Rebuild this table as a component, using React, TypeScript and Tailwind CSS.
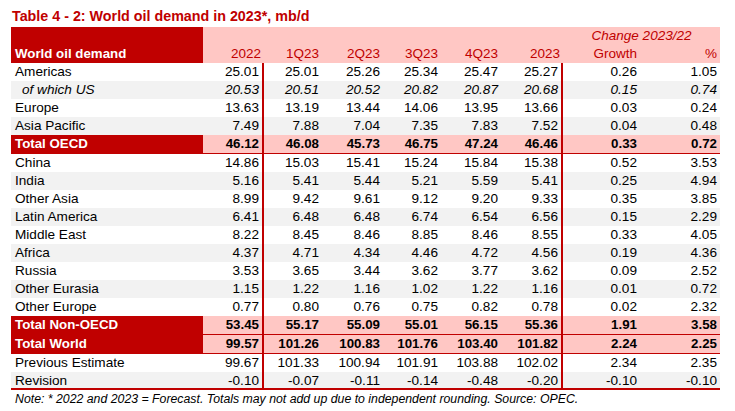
import React from "react";

type RowKind = "plain" | "sub" | "total" | "world";

type Row = {
  label: string;
  values: string[];
  kind: RowKind;
  grey?: boolean;
};

const ROWS: Row[] = [
  { label: "Americas", values: ["25.01", "25.01", "25.26", "25.34", "25.47", "25.27", "0.26", "1.05"], kind: "plain" },
  { label: "of which US", values: ["20.53", "20.51", "20.52", "20.82", "20.87", "20.68", "0.15", "0.74"], kind: "sub", grey: true },
  { label: "Europe", values: ["13.63", "13.19", "13.44", "14.06", "13.95", "13.66", "0.03", "0.24"], kind: "plain" },
  { label: "Asia Pacific", values: ["7.49", "7.88", "7.04", "7.35", "7.83", "7.52", "0.04", "0.48"], kind: "plain", grey: true },
  { label: "Total OECD", values: ["46.12", "46.08", "45.73", "46.75", "47.24", "46.46", "0.33", "0.72"], kind: "total" },
  { label: "China", values: ["14.86", "15.03", "15.41", "15.24", "15.84", "15.38", "0.52", "3.53"], kind: "plain" },
  { label: "India", values: ["5.16", "5.41", "5.44", "5.21", "5.59", "5.41", "0.25", "4.94"], kind: "plain", grey: true },
  { label: "Other Asia", values: ["8.99", "9.42", "9.61", "9.12", "9.20", "9.33", "0.35", "3.85"], kind: "plain" },
  { label: "Latin America", values: ["6.41", "6.48", "6.48", "6.74", "6.54", "6.56", "0.15", "2.29"], kind: "plain", grey: true },
  { label: "Middle East", values: ["8.22", "8.45", "8.46", "8.85", "8.46", "8.55", "0.33", "4.05"], kind: "plain" },
  { label: "Africa", values: ["4.37", "4.71", "4.34", "4.46", "4.72", "4.56", "0.19", "4.36"], kind: "plain", grey: true },
  { label: "Russia", values: ["3.53", "3.65", "3.44", "3.62", "3.77", "3.62", "0.09", "2.52"], kind: "plain" },
  { label: "Other Eurasia", values: ["1.15", "1.22", "1.16", "1.02", "1.22", "1.16", "0.01", "0.72"], kind: "plain", grey: true },
  { label: "Other Europe", values: ["0.77", "0.80", "0.76", "0.75", "0.82", "0.78", "0.02", "2.32"], kind: "plain" },
  { label: "Total Non-OECD", values: ["53.45", "55.17", "55.09", "55.01", "56.15", "55.36", "1.91", "3.58"], kind: "total" },
  { label: "Total World", values: ["99.57", "101.26", "100.83", "101.76", "103.40", "101.82", "2.24", "2.25"], kind: "world" },
  { label: "Previous Estimate", values: ["99.67", "101.33", "100.94", "101.91", "103.88", "102.02", "2.34", "2.35"], kind: "plain" },
  { label: "Revision", values: ["-0.10", "-0.07", "-0.11", "-0.14", "-0.48", "-0.20", "-0.10", "-0.10"], kind: "plain", grey: true },
];

const HEADS = ["2022", "1Q23", "2Q23", "3Q23", "4Q23", "2023", "Growth", "%"];

const GRID = "grid grid-cols-[192px_61px_58px_61px_58px_60px_62px_77px_80px]";

function rowClass(row: Row, last: boolean) {
  if (row.kind === "total") return "h-[19px] border-b-2 border-[#c00000]";
  if (row.kind === "world") return "h-[19px] border-b-[4px] border-[#c00000]";
  let c = "h-[18px]";
  if (row.grey) c += " bg-[#f2f2f2]";
  if (last) c += " border-b-2 border-[#c00000]";
  return c;
}

export default function App() {
  return (
    <div
      className="h-[411px] w-[735px] bg-white text-black"
      style={{ fontFamily: '"Liberation Sans", Arial, sans-serif' }}
    >
      <div className="pl-[12px] pt-[8px] text-[14.3px] font-bold leading-[16px] text-[#c00000]">
        Table 4 - 2: World oil demand in 2023*, mb/d
      </div>

      <div className="ml-[11px] mt-[3px] w-[709px]">
        {/* header */}
        <div className={`${GRID} h-[36px] bg-[#ffc7c4] text-[13.5px] leading-[18px] text-[#c00000]`}>
          <div className="row-span-2 flex items-end bg-[#c00000] pl-[4px] text-[13.3px] font-bold text-white">
            World oil demand
          </div>
          <div className="col-span-6" />
          <div className="col-span-2 text-center italic">Change 2023/22</div>
          {HEADS.map((h) => (
            <div key={h} className="pr-[3px] text-right">
              {h}
            </div>
          ))}
        </div>

        {/* body */}
        {ROWS.map((row, i) => {
          const bold = row.kind === "total" || row.kind === "world";
          return (
            <div
              key={row.label}
              className={`${GRID} leading-[18px] ${bold ? "text-[13.3px]" : "text-[13.6px]"} ${rowClass(row, i === ROWS.length - 1)}`}
            >
              <div
                className={
                  bold
                    ? "bg-[#c00000] pl-[4px] font-bold text-white"
                    : row.kind === "sub"
                      ? "pl-[11px] italic"
                      : "pl-[4px]"
                }
              >
                {row.label}
              </div>
              {row.values.map((v, j) => (
                <div
                  key={j}
                  className={`pr-[3px] text-right ${bold ? "bg-[#ffc7c4] font-bold" : ""} ${row.kind === "sub" ? "italic" : ""} ${j === 0 || j === 5 ? "border-r-2 border-[#c00000]" : ""}`}
                >
                  {v}
                </div>
              ))}
            </div>
          );
        })}
      </div>

      <div className="mt-[1px] pl-[15px] text-[12.3px] italic leading-[16px]">
        Note: * 2022 and 2023 = Forecast. Totals may not add up due to independent rounding. Source: OPEC.
      </div>
    </div>
  );
}
